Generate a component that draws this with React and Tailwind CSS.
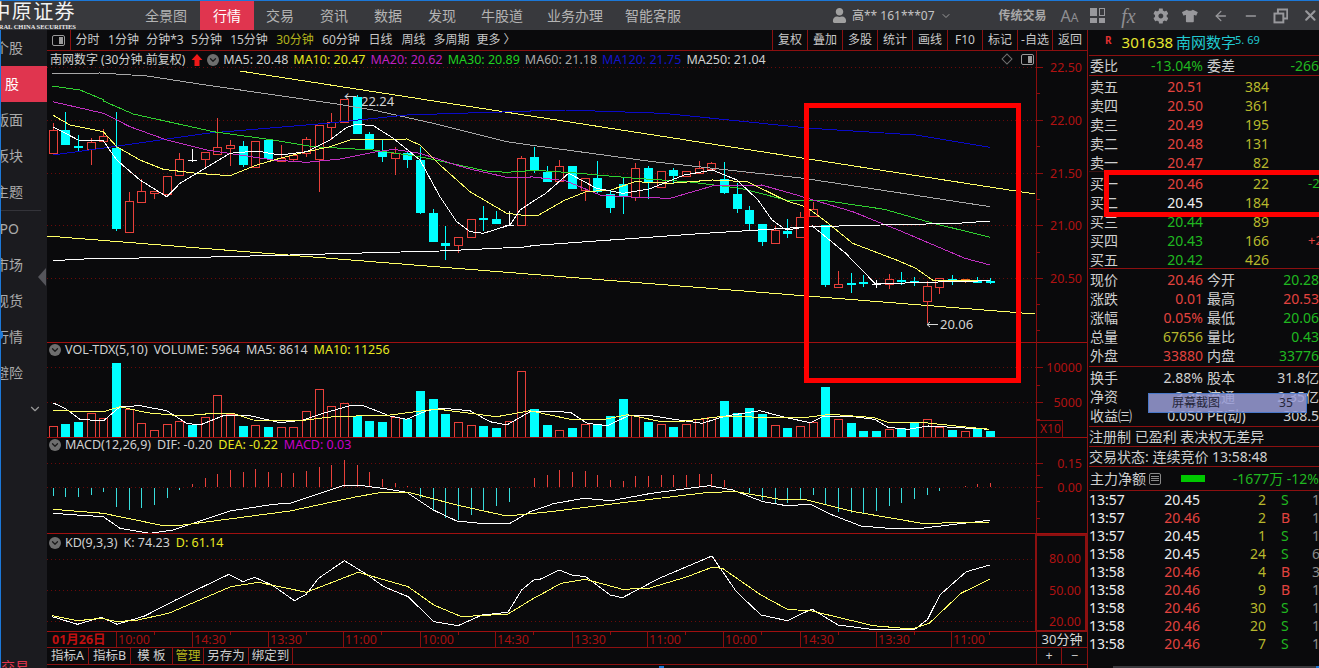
import React from "react";
import { FaCog, FaTshirt, FaUser } from "react-icons/fa";
import { ArrowLeft, Minus, X, ChevronDown } from "lucide-react";

const BG = "#0a0a0c";
const AX = "#8c0d0d";
const GRID = "#6a0a0a";
const RED = "#e8403a";
const CYAN = "#00ffff";
const cx = (i) => Math.round(52.7 + 12.665 * i);
const z5 = (p) => p.map(([x, y]) => [40 + x / 3, 90 + y / 3]);
const z6 = (p) => p.map(([x, y]) => [530 + x / 2.851, 90 + y / 3]);
const z7 = (p) => p.map(([x, y]) => [40 + x / 3, 340 + y / 3]);
const z8 = (p) => p.map(([x, y]) => [550 + x / 2.958, 340 + y / 3]);
const z9 = (p) => p.map(([x, y]) => [x / 2.904, 530 + y / 3]);
const z10 = (p) => p.map(([x, y]) => [540 + x / 2.851, 530 + y / 3]);
const pts = (a) => a.map(([x, y]) => `${x.toFixed(1)},${y.toFixed(1)}`).join(" ");

const candles = [
  [130,153,123,153,"r"],[130,145,112,145,"c"],[146,148,135,151,"c"],[142,149,138,165,"r"],[136,141,129,142,"r"],
  [148,229,112,231,"c"],[201,232,192,232,"r"],[191,202,179,203,"r"],[191,193,191,199,"r"],[176,194,176,194,"r"],
  [159,175,153,175,"r"],[160,161,149,162,"w"],[152,159,152,167,"r"],[147,154,118,154,"r"],[145,148,140,166,"r"],
  [146,165,141,167,"c"],[141,167,141,167,"r"],[140,159,140,160,"c"],[158,161,145,162,"r"],[155,159,155,161,"r"],
  [139,153,137,157,"r"],[125,159,125,192,"r"],[122,127,113,140,"r"],[99,122,99,122,"r"],[97,134,95,134,"c"],
  [134,149,132,150,"c"],[151,157,139,162,"c"],[153,158,147,175,"r"],[153,160,152,168,"c"],[160,213,147,214,"c"],
  [213,242,209,242,"c"],[243,246,226,260,"c"],[237,245,237,253,"r"],[219,237,219,237,"r"],[218,219,206,231,"c"],
  [219,224,211,224,"c"],[225,226,211,226,"w"],[158,225,156,225,"r"],[157,171,147,173,"c"],[172,182,166,182,"c"],
  [166,181,160,181,"r"],[166,189,166,189,"c"],[178,190,178,201,"r"],[178,192,161,193,"c"],[194,208,190,213,"c"],
  [184,196,177,214,"c"],[168,197,163,201,"r"],[168,183,166,199,"c"],[171,187,171,187,"r"],[170,176,168,183,"c"],
  [171,176,171,176,"r"],[168,173,161,173,"r"],[163,169,162,169,"r"],[179,193,162,194,"c"],[194,209,183,213,"c"],
  [210,224,206,230,"c"],[224,242,224,246,"c"],[230,243,226,243,"r"],[231,234,219,238,"c"],[217,237,212,237,"r"],
  [209,216,202,216,"r"],[225,285,225,287,"c"],[284,287,271,288,"r"],[283,285,273,293,"c"],[282,283,275,287,"c"],
  [284,285,280,288,"w"],[279,284,274,289,"r"],[280,281,272,285,"c"],[281,282,277,286,"c"],[286,301,281,323,"r"],
  [278,287,278,294,"r"],[279,281,275,285,"c"],[279,281,279,283,"o"],[281,282,277,283,"c"],[281,282,278,284,"c"],
];

const volTops = [426,424,422,413,418,363,409,423,430,424,421,425,417,395,414,426,425,427,427,427,411,389,406,403,416,421,422,417,419,391,399,414,422,425,426,428,421,371,409,425,430,428,424,424,416,399,415,422,424,427,424,419,417,401,413,408,414,425,428,426,422,387,419,423,431,431,429,428,423,419,427,430,431,428,431];
const volRed = new Set([0,3,4,6,7,8,9,10,12,13,14,16,18,19,20,21,22,23,27,32,33,36,37,40,42,46,48,50,51,52,57,59,60,62,66,69,70,72]);

const macdZ = [468,470,470,465,455,500,510,503,495,473,449,432,414,403,391,397,388,397,400,400,393,381,375,361,375,397,418,429,437,475,510,535,540,525,510,497,485,441,415,405,390,397,393,405,420,423,408,408,405,405,405,403,403,420,null,460,480,488,490,477,465,495,515,520,520,512,497,488,476,466,452,null,439,432,430];

const ma5 = [...z5([[38,110],[115,150],[190,152],[230,210],[300,270],[380,320],[420,280],[470,250],[570,190],[650,183],[720,195],[800,185],[870,150],[920,112],[950,103],[1000,107],[1060,145],[1140,210],[1200,320],[1250,395],[1290,425],[1330,430],[1410,405],[1440,360]]),...z6([[0,340],[45,310],[110,250],[190,295],[265,310],[340,297],[440,255],[520,240],[590,270],[650,330],[690,390],[730,420],[805,408],[900,490],[985,582],[1130,577],[1312,572]])];
const ma10 = [...z5([[38,75],[90,105],[190,125],[230,170],[300,210],[370,238],[470,250],[570,257],[650,225],[720,205],[800,185],[870,170],[930,150],[1100,147],[1140,165],[1200,225],[1290,305],[1400,370],[1470,378]]),...z6([[0,378],[25,375],[100,330],[160,305],[230,300],[300,275],[400,280],[520,270],[620,275],[730,332],[790,352],[850,400],[920,460],[1050,512],[1100,535],[1150,572],[1312,572]])];
const ma20 = [...z5([[38,35],[190,70],[270,110],[380,150],[500,180],[600,195],[700,210],[800,217],[900,207],[1000,187],[1060,178],[1140,190],[1280,235],[1400,262],[1470,262]]),...z6([[0,260],[100,272],[200,315],[300,322],[400,325],[520,288],[660,285],[760,315],[920,365],[1050,420],[1240,505],[1312,525]])];
const ma30 = [[52,86],[80,90],[104,100],...z5([[190,33],[280,72],[520,125],[700,150],[820,170],[1000,180],[1140,200],[1340,243],[1400,247],[1470,242]]),...z6([[0,240],[120,248],[300,265],[450,275],[600,295],[730,330],[830,330],[1010,358],[1150,400],[1312,442]])];
const ma60 = [[52,74],[100,73],[147,76],[206,85],[337,104],...z5([[1000,60],[1180,100],[1400,155],[1470,165]]),...z6([[0,165],[350,215],[780,265],[1000,300],[1312,350]])];
const ma120 = [...z5([[38,195],[220,170],[500,130],[860,100],[1100,75],[1350,67],[1470,64]]),...z6([[0,60],[100,60],[380,70],[800,115],[1100,135],[1312,172]])];
const ma250 = [...z5([[38,512],[170,505],[430,503],[750,495],[930,490],[1200,483],[1470,470]]),...z6([[0,467],[500,430],[800,410],[1000,405],[1220,400],[1312,393]])];

const volW = [...z7([[38,188],[75,205],[120,238],[190,243],[240,200],[300,197],[380,212],[440,250],[480,255],[550,227],[630,227],[720,248],[790,240],[850,220],[930,197],[970,197],[1050,228],[1100,238],[1160,212],[1210,205],[1290,212],[1350,245],[1400,255],[1470,215],[1530,215]]),...z8([[0,214],[60,217],[110,250],[170,257],[230,228],[300,227],[380,240],[450,250],[520,228],[620,212],[700,233],[770,248],[810,228],[880,228],[960,238],[1000,262],[1060,268],[1120,258],[1190,262],[1300,268]])];
const volY = [...z7([[38,212],[190,215],[240,200],[320,218],[430,228],[520,220],[580,220],[640,240],[780,242],[880,230],[1050,225],[1190,207],[1290,220],[1370,230],[1470,212],[1530,225]]),...z8([[0,225],[60,238],[160,238],[230,224],[320,243],[400,243],[500,230],[690,232],[760,232],[830,223],[960,233],[1000,247],[1100,247],[1200,258],[1300,268]])];
const macdW = [...z7([[38,520],[80,523],[190,530],[240,565],[330,580],[400,570],[570,513],[700,493],[750,490],[910,437],[960,436],[1040,447],[1100,457],[1180,510],[1250,543],[1320,550],[1410,550],[1470,515],[1530,495]]),...z8([[0,493],[100,475],[180,482],[300,460],[470,437],[540,450],[630,485],[700,497],[770,493],[830,523],[920,558],[1000,565],[1100,565],[1180,555],[1300,541]])];
const macdY = [...z7([[38,508],[190,520],[360,555],[430,555],[750,513],[950,470],[1020,458],[1110,458],[1250,495],[1400,528],[1530,515]]),...z8([[0,515],[200,490],[470,457],[550,455],[680,478],[760,480],[900,515],[1100,550],[1300,547]])];
const kdW = [...z9([[152,260],[225,283],[295,262],[340,283],[420,258],[510,210],[600,165],[665,133],[705,155],[740,142],[790,165],[855,212],[890,192],[925,145],[1000,92],[1060,130],[1115,170],[1185,200],[1260,275],[1330,287],[1400,255],[1475,247],[1515,180],[1550,150]]),...z10([[0,148],[55,120],[90,135],[130,140],[200,195],[235,203],[340,145],[490,78],[560,185],[630,255],[705,272],[775,237],[850,285],[960,300],[1070,297],[1105,268],[1140,195],[1215,125],[1282,105]])];
const kdY = [...z9([[152,257],[225,272],[295,265],[340,275],[400,270],[490,250],[670,170],[750,157],[890,187],[1040,127],[1185,170],[1260,225],[1340,260],[1475,252],[1550,205]]),...z10([[0,195],[60,160],[130,148],[235,178],[310,175],[420,140],[490,112],[520,115],[630,195],[705,238],[775,243],[950,287],[1060,297],[1110,280],[1200,190],[1282,148]])];

const Line = ({ p, c }) => <polyline points={pts(p)} fill="none" stroke={c} strokeWidth="1" shapeRendering="crispEdges" />;
const Dots = ({ y }) => <line x1="47" x2="1036" y1={y + 0.5} y2={y + 0.5} stroke={GRID} strokeDasharray="1 3" />;
const Hollow = ({ x, t, b }) => (
  <g shapeRendering="crispEdges">
    <rect x={x - 4} y={t} width="9" height={b - t + 1} fill={RED} />
    {b - t > 1 && <rect x={x - 3} y={t + 1} width="7" height={b - t - 1} fill={BG} />}
  </g>
);

const Axis = ({ top, h, labels, minor }) => (
  <g>
    <line x1="1036.5" x2="1036.5" y1={top} y2={top + h} stroke={AX} />
    {minor.map((y) => <line key={y} x1="1036" x2="1040" y1={y + 0.5} y2={y + 0.5} stroke={AX} shapeRendering="crispEdges" />)}
    {labels.map(([t, y]) => (
      <g key={t}>
        <line x1="1036" x2="1043" y1={y + 0.5} y2={y + 0.5} stroke={AX} shapeRendering="crispEdges" />
        <text x="1082" y={y + 5} textAnchor="end" fontSize="12.5" fill="#b01212">{t}</text>
      </g>
    ))}
  </g>
);

const MainChart = () => (
  <svg viewBox="47 51 1040 291" className="block h-[291px] w-[1040px]">
    {[67, 120, 173, 225, 278].map((y) => <Dots key={y} y={y} />)}
    <Axis top={51} h={291} labels={[["22.50",67],["22.00",120],["21.50",173],["21.00",225],["20.50",278]]} minor={[93,146,199,252,304,330]} />
    <line x1="240" y1="71" x2="1035" y2="194" stroke="#ffff66" shapeRendering="crispEdges" />
    <line x1="47" y1="236" x2="1035" y2="314" stroke="#ffff66" shapeRendering="crispEdges" />
    <text x="344" y="101" fontSize="13" fill="#d4d4d4">←</text>
    {candles.map(([t, b, wt, wb, k], i) => {
      const x = cx(i);
      const col = k === "r" ? RED : k === "c" ? CYAN : k === "o" ? "#f07020" : "#ffffff";
      const solid = k === "c" || k === "w" || k === "o";
      return (
        <g key={i} shapeRendering="crispEdges">
          <line x1={x + 0.5} x2={x + 0.5} y1={wt} y2={wb} stroke={col} />
          {solid ? (
            b - t > 2 ? <rect x={x - 4} y={t} width="9" height={b - t} fill={col} /> : <rect x={x - 4} y={t} width="9" height={k === "w" ? 1 : 2} fill={col} />
          ) : (
            <Hollow x={x} t={t} b={b} />
          )}
        </g>
      );
    })}
    <Line p={ma60} c="#a8a8a8" />
    <Line p={ma120} c="#0a0ac8" />
    <Line p={ma30} c="#30d030" />
    <Line p={ma20} c="#c030c0" />
    <Line p={ma10} c="#ffff66" />
    <Line p={ma5} c="#ffffff" />
    <Line p={ma250} c="#ffffff" />
    <text x="361" y="106" fontSize="13" fill="#d4d4d4">22.24</text>
    <line x1="927" x2="938" y1="324.5" y2="324.5" stroke="#d8d8d8" />
    <polyline points="930,322 927,324.5 930,327" fill="none" stroke="#d8d8d8" />
    <text x="940" y="329" fontSize="13" fill="#d4d4d4">20.06</text>
  </svg>
);

const VolChart = () => (
  <svg viewBox="47 342 1040 96" className="block h-[96px] w-[1040px]">
    <line x1="47" x2="1087" y1="342.5" y2="342.5" stroke="#a01010" />
    <Dots y={367} /><Dots y={402} />
    <Axis top={342} h={96} labels={[["10000",367],["5000",402]]} minor={[385,419]} />
    {volTops.map((t, i) => {
      const x = cx(i);
      return volRed.has(i)
        ? <Hollow key={i} x={x} t={t} b={437} />
        : <rect key={i} x={x - 4} y={t} width="9" height={437 - t} fill={CYAN} shapeRendering="crispEdges" />;
    })}
    <Line p={volW} c="#ffffff" />
    <Line p={volY} c="#ffff66" />
    <line x1="47" x2="1087" y1="437.5" y2="437.5" stroke="#a01010" />
    <rect x="1036.5" y="420.5" width="26" height="17" fill="none" stroke={AX} />
    <text x="1040" y="433" fontSize="12" fill="#b01212">X10</text>
  </svg>
);

const MacdChart = () => (
  <svg viewBox="47 438 1040 96" className="block h-[96px] w-[1040px]">
    <Dots y={463} /><Dots y={487} />
    <Axis top={438} h={96} labels={[["0.15",463],["0.00",487]]} minor={[475,501,518]} />
    {macdZ.map((z, i) => {
      if (z == null) return null;
      const y = Math.round(340 + z / 3);
      const up = (i >= 11 && i <= 28) || (i >= 37 && i <= 53) || i >= 72;
      return <line key={i} x1={cx(i) + 0.5} x2={cx(i) + 0.5} y1={up ? y : 488} y2={up ? 487 : y} stroke={up ? RED : "#38dcdc"} shapeRendering="crispEdges" />;
    })}
    <Line p={macdW} c="#ffffff" />
    <Line p={macdY} c="#ffff66" />
    <line x1="47" x2="1087" y1="533.5" y2="533.5" stroke="#a01010" />
  </svg>
);

const KdChart = () => (
  <svg viewBox="47 534 1040 98" className="block h-[98px] w-[1040px]">
    <Dots y={559} /><Dots y={590} /><Dots y={621} />
    <rect x="1036" y="535" width="50" height="96" fill="none" stroke="#8c1010" strokeWidth="2" />
    {[["80.00",558],["50.00",590],["20.00",621]].map(([t, y]) => (
      <text key={t} x="1081" y={y + 5} textAnchor="end" fontSize="12.5" fill="#b01212">{t}</text>
    ))}
    <Line p={kdW} c="#ffffff" />
    <Line p={kdY} c="#ffff66" />
    <line x1="47" x2="1036" y1="631.5" y2="631.5" stroke="#a01010" />
  </svg>
);

const timeTicks = [[116,"10:00"],[192,"14:30"],[268,"13:30"],[343,"11:00"],[420,"10:00"],[495,"14:30"],[572,"13:30"],[647,"11:00"],[723,"10:00"],[800,"14:30"],[876,"13:30"],[951,"11:00"]];
const TimeAxis = () => (
  <svg viewBox="47 632 989 15" className="block h-[15px] w-[989px]">
    <text x="52" y="644" fontSize="12.5" fontWeight="700" fill="#c01010">01月26日</text>
    {timeTicks.map(([x, t]) => (
      <g key={x + t} shapeRendering="crispEdges">
        <line x1={x + 0.5} x2={x + 0.5} y1="632" y2="647" stroke={AX} />
        <line x1={x + 38.5} x2={x + 38.5} y1="632" y2="635" stroke={AX} />
        <text x={x + 2} y="644" fontSize="12.5" fill="#a81010">{t}</text>
      </g>
    ))}
  </svg>
);

const CircleChev = () => (
  <span className="flex h-[12px] w-[12px] shrink-0 items-center justify-center rounded-full bg-[#6e6e6e]">
    <ChevronDown size={10} strokeWidth={3} color="#1a1a1a" />
  </span>
);

const PanelIcon = () => (
  <span className="flex h-[11px] w-[13px] items-center justify-end rounded-[2px] border border-[#9a9a9a] p-px">
    <span className="h-full w-[4px] bg-[#9a9a9a]" />
  </span>
);

const LB = ({ c = "text-[#d0d0d0]", children }) => <span className={`whitespace-nowrap ${c}`}>{children}</span>;

const navs = [["全景图",""],["行情","bg-[#e0354f] text-white"],["交易","ml-[-1px]"],["资讯",""],["数据",""],["发现",""],["牛股道","ml-[-1px]"],["业务办理","ml-[-2px] mr-[-4px]"],["智能客服",""]];
const periods = [["分时","w-[33px]"],["1分钟","w-[39px]"],["分钟*3","w-[44px]"],["5分钟","w-[39px]"],["15分钟","w-[46px]"],["30分钟","w-[46px]"],["60分钟","w-[46px]"],["日线","w-[33px]"],["周线","w-[33px]"],["多周期","w-[43px]"],["更多 〉","w-[46px]"]];
const tools = ["复权","叠加","多股","统计","画线","F10","标记","-自选","返回"];
const side = [["个股","w-[22px]"],["股","w-[18px]",true],["版面","w-[22px]"],["板块","w-[22px]"],["主题","w-[22px]"]];
const side2 = [["IPO","w-[18px]"],["市场","w-[22px]"],["现货","w-[22px]"],["行情","w-[22px]"],["避险","w-[22px]"]];

const R = "text-[#e2433f]", G = "text-[#20b820]", Y = "text-[#b8b82c]", W = "text-[#eeeeee]", L = "text-[#cfcfcf]";
const sells = [["卖五","20.51","384"],["卖四","20.50","361"],["卖三","20.49","195"],["卖二","20.48","131"],["卖一","20.47","82"]];
const buys = [["买一","20.46","22",R,"-2",G],["买二","20.45","184",W,"",G],["买三","20.44","89",G,"",G],["买四","20.43","166",G,"+2",R],["买五","20.42","426",G,"",G]];
const stats = [["现价","20.46",R,"今开","20.28",G],["涨跌","0.01",R,"最高","20.53",R],["涨幅","0.05%",R,"最低","20.06",G],["总量","67656",Y,"量比","0.43",G],["外盘","33880",R,"内盘","33776",G]];
const stats2 = [["换手","2.88%",L,"股本","31.8亿",L],["净资","3.35",L,"流通","2.35亿",L],["收益㈢","0.050",L,"PE(动)","308.5",L]];
const ticks = [["13:57","20.45",W,"2","S","1"],["13:57","20.46",R,"2","B","1"],["13:57","20.45",W,"1","S","1"],["13:58","20.45",W,"24","S","6"],["13:58","20.46",R,"4","B","3"],["13:58","20.46",R,"9","B","1"],["13:58","20.46",R,"30","S","1"],["13:58","20.46",R,"20","S","1"],["13:58","20.46",R,"7","S","1"]];

const DepthRow = ({ l, p, v, pc, x, xc }) => (
  <div className="grid h-[19px] grid-cols-[30px_83px_66px_1fr] items-center pl-px">
    <span className={L}>{l}</span>
    <span className={`text-right ${pc}`}>{p}</span>
    <span className={`text-right ${Y}`}>{v}</span>
    <span className={`pl-[39px] text-[13px] whitespace-nowrap ${xc}`}>{x}</span>
  </div>
);
const StatRow = ({ a, b, c, d, e, f }) => (
  <div className="grid h-[19px] grid-cols-[30px_83px_4px_44px_1fr] items-center pl-px">
    <span className={`whitespace-nowrap ${L}`}>{a}</span>
    <span className={`text-right ${c}`}>{b}</span>
    <span />
    <span className={`whitespace-nowrap ${L}`}>{d}</span>
    <span className={`text-right whitespace-nowrap ${f}`}>{e}</span>
  </div>
);

export default function App() {
  return (
    <div className="relative flex h-[668px] w-[1319px] flex-col overflow-hidden bg-[#0a0a0c] font-['Noto_Sans','Noto_Sans_CJK_SC',sans-serif] text-[14px] leading-none">
      <header className="flex h-[30px] shrink-0 items-center border-t border-[#1c78d8] bg-[#38393d] text-[#b4b4b4]">
        <div className="flex h-full w-[132px] shrink-0 items-start">
          <div className="flex w-[76px] flex-col items-end overflow-hidden">
            <span className="mt-[1px] h-[20px] shrink-0 text-[20px] leading-[20px] tracking-[1.4px] whitespace-nowrap text-[#f2f2f2]">中原证券</span>
            <span className="mt-[1px] shrink-0 font-['Liberation_Serif',serif] text-[6.5px] leading-[7px] font-bold whitespace-nowrap text-[#e8e8e8]">CENTRAL CHINA SECURITIES</span>
          </div>
        </div>
        <nav className="flex h-full">
          {navs.map(([n, c]) => (
            <span key={n} className={`flex h-full items-center px-[13px] whitespace-nowrap ${c}`}>{n}</span>
          ))}
        </nav>
        <div className="ml-[138px] flex items-center text-[#c4c4c4]">
          <FaUser size={15} className="text-[#a0a0a0]" />
          <span className="ml-[5px] text-[12px] whitespace-nowrap">高** 161***07</span>
          <ChevronDown size={12} className="ml-[5px] text-[#9a9a9a]" />
        </div>
        <span className="ml-[47px] text-[12px] font-bold whitespace-nowrap text-[#a8a8a8]">传统交易</span>
        <span className="ml-[14px] text-[16px] whitespace-nowrap text-[#8e8e92]">A<span className="text-[12px]">A</span></span>
        <div className="ml-[12px] grid h-[15px] w-[15px] grid-cols-2 gap-[2px]">
          <span className="bg-[#98989c]" /><span className="border border-[#98989c]" /><span className="bg-[#98989c]" /><span className="bg-[#98989c]" />
        </div>
        <span className="ml-[16px] font-['Liberation_Serif',serif] text-[20px] whitespace-nowrap text-[#8e8e92] italic">fx</span>
        <FaCog size={16} className="ml-[17px] text-[#98989c]" />
        <FaTshirt size={16} className="ml-[14px] text-[#98989c]" />
        <ArrowLeft size={16} className="ml-[15px] text-[#98989c]" />
        <Minus size={16} className="ml-[14px] text-[#98989c]" />
        <svg width="16" height="16" viewBox="0 0 16 16" className="ml-[14px]" fill="none" stroke="#98989c" strokeWidth="2"><rect x="1.5" y="5.5" width="9" height="9" /><path d="M5 5V1.5h9.5v9H11" /></svg>
        <X size={17} strokeWidth={3} className="ml-[14px] text-[#98989c]" />
      </header>

      <div className="flex min-h-0 flex-1">
        <aside className="relative flex w-[47px] shrink-0 flex-col border-l border-[#1c78d8] bg-[#1b1b1f] text-[#ababab]">
          <div>
            {side.map(([t, w, on]) => (
              <div key={t} className={`flex h-[36px] items-center ${on ? "bg-[#e0354f] text-white" : ""}`}>
                <span className={`flex justify-end overflow-hidden whitespace-nowrap ${w}`}>{t}</span>
              </div>
            ))}
          </div>
          <div className="mr-[6px] h-px bg-[#34343a]" />
          {side2.map(([t, w]) => (
            <div key={t} className="flex h-[36px] items-center">
              <span className={`flex justify-end overflow-hidden whitespace-nowrap ${w}`}>{t}</span>
            </div>
          ))}
          <div className="flex h-[36px] items-center justify-end pr-[5px]">
            <ChevronDown size={14} className="text-[#9a9a9a]" />
          </div>
          <div className="mt-auto mb-[-8px] flex h-[16px] w-[28px] justify-end overflow-hidden whitespace-nowrap text-[#e0354f]">交易</div>
          <span className="absolute left-[37px] top-[238px] h-0 w-0 border-y-[9px] border-r-[8px] border-y-transparent border-r-[#55555b]" />
          <span className="absolute left-[-1px] top-[301px] h-[8px] w-[3px] rounded-r-full bg-[#1c78d8]" />
        </aside>

        <main className="flex w-[1040px] shrink-0 flex-col">
          <div className="flex h-[21px] shrink-0 items-center border-b border-[#8c1010] text-[12px] text-[#c8c8c8]">
            <div className="flex h-full w-[24px] shrink-0 items-center justify-center border-r border-[#8c1010]"><PanelIcon /></div>
            <div className="flex flex-1 items-center">
              {periods.map(([p, w]) => (
                <span key={p} className={`text-center whitespace-nowrap ${w} ${p === "30分钟" ? "text-[#b4b41c]" : ""}`}>{p}</span>
              ))}
            </div>
            {tools.map((t) => (
              <span key={t} className="flex h-full w-[35px] shrink-0 items-center justify-center border-l border-[#8c1010] whitespace-nowrap">{t}</span>
            ))}
          </div>

          <div className="relative h-[291px] shrink-0">
            <MainChart />
            <div className="absolute left-[3px] top-[2px] flex h-[14px] items-center text-[12.5px]">
              <span className="text-[12px]"><LB>南网数字 (30分钟.前复权)</LB></span>
              <svg width="12" height="14" viewBox="0 0 12 14" className="ml-[6px]"><path d="M6 1 11.5 7H8.5v6h-5V7H.5z" fill="#f01818" /></svg>
              <span className="ml-[4px]"><CircleChev /></span>
              <span className="ml-[4px]"><LB>MA5: 20.48</LB></span>
              <span className="ml-[5px]"><LB c="text-[#e8e820]">MA10: 20.47</LB></span>
              <span className="ml-[5px]"><LB c="text-[#c020c0]">MA20: 20.62</LB></span>
              <span className="ml-[5px]"><LB c="text-[#20d020]">MA30: 20.89</LB></span>
              <span className="ml-[5px]"><LB c="text-[#a8a8a8]">MA60: 21.18</LB></span>
              <span className="ml-[5px]"><LB c="text-[#1414c8]">MA120: 21.75</LB></span>
              <span className="ml-[5px]"><LB>MA250: 21.04</LB></span>
            </div>
            <span className="absolute left-[956px] top-[4px] h-[8px] w-[8px] rotate-45 border border-[#707070]" />
            <span className="absolute left-[974px] top-[3px]"><PanelIcon /></span>
          </div>

          <div className="relative h-[96px] shrink-0">
            <VolChart />
            <div className="absolute left-[2px] top-[1px] flex h-[14px] items-center gap-[6px] text-[12.5px]">
              <span className="mr-[-2px]"><CircleChev /></span>
              <LB>VOL-TDX(5,10)</LB><LB>VOLUME: 5964</LB><LB>MA5: 8614</LB><LB c="text-[#e8e820]">MA10: 11256</LB>
            </div>
          </div>
          <div className="relative h-[96px] shrink-0">
            <MacdChart />
            <div className="absolute left-[2px] top-[0px] flex h-[14px] items-center gap-[6px] text-[12.5px]">
              <span className="mr-[-2px]"><CircleChev /></span>
              <LB>MACD(12,26,9)</LB><LB>DIF: -0.20</LB><LB c="text-[#e8e820]">DEA: -0.22</LB><LB c="text-[#c800c8]">MACD: 0.03</LB>
            </div>
          </div>
          <div className="relative h-[98px] shrink-0">
            <KdChart />
            <div className="absolute left-[2px] top-[2px] flex h-[14px] items-center gap-[6px] text-[12.5px]">
              <span className="mr-[-2px]"><CircleChev /></span>
              <LB>KD(9,3,3)</LB><LB>K: 74.23</LB><LB c="text-[#e8e820]">D: 61.14</LB>
            </div>
          </div>

          <div className="flex h-[15px] shrink-0">
            <TimeAxis />
            <div className="flex w-[51px] items-center justify-center border-l border-[#8c1010] text-[13px] whitespace-nowrap text-[#d8d8d8]">30分钟</div>
          </div>

          <div className="flex h-[18px] shrink-0 border-y border-[#8c1010] text-[12.5px] text-[#cfcfcf]">
            {[["指标A","w-[42px]"],["指标B","w-[42px]"],["模 板","w-[42px]"],["管理","w-[31px] text-[#b4b41c]"],["另存为","w-[45px]"],["绑定到","w-[44px]"]].map(([t, c]) => (
              <span key={t} className={`flex items-center justify-center border-r border-[#8c1010] whitespace-nowrap ${c}`}>{t}</span>
            ))}
            <div className="flex-1" />
            <span className="flex w-[25px] items-center justify-center border-l border-[#8c1010]">+</span>
            <span className="flex w-[26px] items-center justify-center border-l border-[#8c1010]">−</span>
          </div>
          <div className="relative h-[4px] shrink-0">
            <span className="absolute left-[612px] top-[1px] h-[3px] w-[5px] bg-[#1c78d8]" />
          </div>
        </main>

        <section className="flex w-[232px] shrink-0 flex-col overflow-hidden border-l border-[#8c1010] pl-px text-[14px]">
          <div className="flex h-[26px] shrink-0 items-center border-b border-[#8c1010] pl-[16px]">
            <span className="mb-[5px] text-[10px] font-bold text-[#e03030]">R</span>
            <span className="ml-[10px] text-[15px] text-[#e8e830]">301638</span>
            <span className="ml-[3px] text-[15px] text-[#20c8d0]">南网数字</span>
            <span className="mb-[7px] ml-[-1px] text-[11px] text-[#20c8d0]">5. 69</span>
          </div>
          <div className="h-[20px] shrink-0 border-b border-[#8c1010]">
            <StatRow a="委比" b="-13.04%" c={G} d="委差" e="-266" f={G} />
          </div>
          <div className="h-[96px] shrink-0 border-b border-[#3a1212] pt-px">
            {sells.map(([l, p, v]) => <DepthRow key={l} l={l} p={p} v={v} pc={R} />)}
          </div>
          <div className="h-[97px] shrink-0 border-b border-[#8c1010] pt-[2px]">
            {buys.map(([l, p, v, pc, x, xc]) => <DepthRow key={l} l={l} p={p} v={v} pc={pc} x={x} xc={xc} />)}
          </div>
          <div className="h-[98px] shrink-0 border-b border-[#8c1010] pt-px">
            {stats.map(([a, b, c, d, e, f]) => <StatRow key={a} a={a} b={b} c={c} d={d} e={e} f={f} />)}
          </div>
          <div className="h-[60px] shrink-0 border-b border-[#8c1010] pt-px">
            {stats2.map(([a, b, c, d, e, f]) => <StatRow key={a} a={a} b={b} c={c} d={d} e={e} f={f} />)}
          </div>
          <div className={`flex h-[20px] shrink-0 items-center border-b border-[#8c1010] whitespace-nowrap ${L}`}>注册制 已盈利 表决权无差异</div>
          <div className={`flex h-[20px] shrink-0 items-center border-b border-[#8c1010] whitespace-nowrap ${L}`}>交易状态: 连续竞价 13:58:48</div>
          <div className="flex h-[24px] shrink-0 items-center border-b border-[#8c1010] pl-px">
            <span className={`whitespace-nowrap ${L}`}>主力净额</span>
            <span className="ml-[3px] flex h-[12px] w-[12px] flex-col justify-center gap-px rounded-[2px] border border-[#8a8a8a] px-px">
              <span className="h-px bg-[#8a8a8a]" /><span className="h-px bg-[#8a8a8a]" /><span className="h-px bg-[#8a8a8a]" />
            </span>
            <span className="ml-[20px] h-[7px] w-[24px] bg-[#00c800]" />
            <span className={`ml-auto whitespace-nowrap ${G}`}>-1677万 -12%</span>
          </div>
          <div>
            {ticks.map(([t, p, pc, v, s, n], i) => (
              <div key={i} className="grid h-[18px] grid-cols-[60px_51px_66px_15px_22px_1fr] items-center">
                <span className="text-[#eeeeee]">{t}</span>
                <span className={`text-right ${pc}`}>{p}</span>
                <span className={`text-right ${Y}`}>{v}</span>
                <span />
                <span className={s === "B" ? R : G}>{s}</span>
                <span className="pl-[9px] text-[#8a8a8a]">{n}</span>
              </div>
            ))}
          </div>
          <div className="mt-auto flex h-[2px] pl-[24px]">
            <span className="flex-1 bg-[#3a3a3e]" />
            <span className="w-[3px] bg-[#1c78d8]" />
          </div>
        </section>
      </div>

      <div className="absolute left-[804px] top-[103px] h-[280px] w-[217px] border-[5px] border-[#ff0000]" />
      <div className="absolute left-[1104px] top-[170px] h-[47px] w-[215px] border-y-[5px] border-l-[5px] border-[#ff0000]" />
      <div className="absolute left-[1148px] top-[393px] flex h-[20px] w-[159px] items-center border border-[#4a78c8] bg-[#9a9ed8]/85 pl-[23px] text-[12px] whitespace-nowrap text-[#26263a]">
        屏幕截图
        <span className="ml-[59px]">35</span>
      </div>
    </div>
  );
}
